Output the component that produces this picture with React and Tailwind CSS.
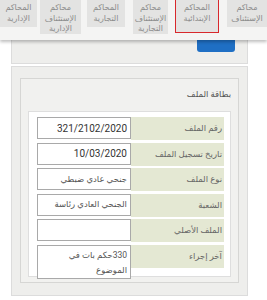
import React from 'react';

const tabs = [
  { lines: ['محاكم', 'الإستئناف'], w: 'w-[40px]', h: 'h-[27px]', mr: 'mr-0' },
  { lines: ['المحاكم', 'الإبتدائية'], w: 'w-[44px]', h: 'h-[33px]', mr: 'mr-[8px]', active: true },
  { lines: ['محاكم', 'الإستئناف', 'التجارية'], w: 'w-[35px]', h: 'h-[34px]', mr: 'mr-[7px]' },
  { lines: ['المحاكم', 'التجارية'], w: 'w-[38px]', h: 'h-[27px]', mr: 'mr-[8px]' },
  { lines: ['محاكم', 'الإستئناف', 'الإدارية'], w: 'w-[41px]', h: 'h-[34px]', mr: 'mr-[6px]' },
  { lines: ['المحاكم', 'الإدارية'], w: 'w-[37px]', h: 'h-[27px]', mr: 'mr-[3px]' },
];

const rows = [
  { label: 'رقم الملف', value: '321/2102/2020', num: true },
  { label: 'تاريخ تسجيل الملف', value: '10/03/2020', num: true },
  { label: 'نوع الملف', value: 'جنحي عادي ضبطي' },
  { label: 'الشعبة', value: 'الجنحي العادي رئاسة' },
  { label: 'الملف الأصلي', value: '' },
  { label: 'آخر إجراء', value: '330حكم بات في الموضوع', tall: true },
];

export default function App() {
  return (
    <div className="relative w-[267px] h-[300px] overflow-hidden bg-white font-['Roboto','DejaVu_Sans',sans-serif]">
      {/* tabs bar lying over the page */}
      <div
        dir="rtl"
        className="absolute top-0 left-0 z-10 flex items-start w-[267px] h-[40px] bg-[#f4f4f3] shadow-[0_2px_3px_rgba(0,0,0,0.25)]"
      >
        {tabs.map((t, i) => (
          <div
            key={i}
            className={`${t.w} ${t.h} ${t.mr} shrink-0 flex flex-col items-center pt-[3px] bg-[#e3e3e2] text-[#8c8c8c] text-[8px] leading-[10.5px] text-center ${
              t.active ? 'border-x-[1.5px] border-b-[1.5px] border-[#d8282c]' : ''
            }`}
          >
            {t.lines.map((l) => (
              <span key={l} className="whitespace-nowrap">{l}</span>
            ))}
          </div>
        ))}
      </div>

      {/* previous panel, mostly hidden */}
      <div className="ml-[11px] w-[237px] h-[64px] bg-[#eeeeec] border-x border-b border-[#dcdcdc] flex items-end justify-end pr-[12px] pb-[11px]">
        <div className="w-[38px] h-[16px] rounded-[3px] bg-[#1f6fc4]" />
      </div>

      {/* file card panel */}
      <div dir="rtl" className="mt-[2px] ml-[11px] w-[237px] h-[230px] bg-[#eeeeec] border border-[#dcdcdc] pt-[11px] px-[8px]">
        <div className="h-[205px] bg-[#f1f1ef] border border-[#d6d6d4] pr-[7px] pl-[7px]">
          <div className="pt-[9px] pb-[11px] text-[8.5px] leading-[12px] text-[#555]">بطاقة الملف</div>
          <div className="h-[166px] bg-white border border-[#dedede] px-[6px] pt-[5px]">
            {rows.map((r) => (
              <div key={r.label} className="flex items-start mb-[2.5px]">
                <div className="w-[93px] h-[23px] bg-[#e4e8d3] flex items-center pr-[2px] text-[8.5px] text-[#666] whitespace-nowrap">
                  {r.label}
                </div>
                <div
                  className={`w-[94px] ${r.tall ? 'h-[34px] items-start pt-[2px] leading-[15px]' : 'h-[22px] items-center'} flex bg-white border border-[#a9a9a9] pr-[3px] pl-[2px] ${
                    r.num ? 'text-[10px] text-[#333]' : 'text-[8.5px] text-[#555]'
                  }`}
                >
                  <span dir="rtl">{r.value}</span>
                </div>
              </div>
            ))}
          </div>
        </div>
      </div>
    </div>
  );
}
